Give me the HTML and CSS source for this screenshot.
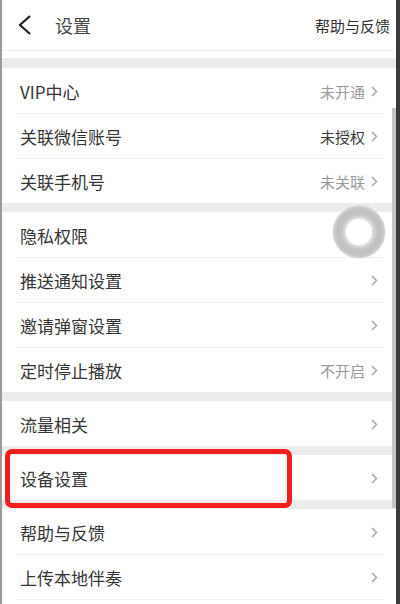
FILE: index.html
```html
<!DOCTYPE html>
<html lang="zh-CN">
<head>
<meta charset="utf-8">
<title>设置</title>
<link rel="stylesheet" href="styles.css">
</head>
<body>
<div class="screen">
  <header class="topbar">
    <div class="topbar-left">
      <svg class="back" width="14" height="20" viewBox="0 0 14 20"><polyline points="12,1 2,10 12,19" fill="none" stroke="#222" stroke-width="2.2" stroke-linejoin="miter"/></svg>
      <span class="title">设置</span>
    </div>
    <span class="help">帮助与反馈</span>
  </header>
  <div class="spacer"></div>

  <section class="group">
    <div class="row"><span class="label">VIP中心</span><span class="value muted">未开通</span><svg class="chev" width="7" height="11" viewBox="0 0 7 11"><polyline points="1,1 5.5,5.5 1,10" fill="none" stroke="#aaa" stroke-width="1.5"/></svg></div>
    <div class="row"><span class="label">关联微信账号</span><span class="value dark">未授权</span><svg class="chev" width="7" height="11" viewBox="0 0 7 11"><polyline points="1,1 5.5,5.5 1,10" fill="none" stroke="#aaa" stroke-width="1.5"/></svg></div>
    <div class="row"><span class="label">关联手机号</span><span class="value muted">未关联</span><svg class="chev" width="7" height="11" viewBox="0 0 7 11"><polyline points="1,1 5.5,5.5 1,10" fill="none" stroke="#aaa" stroke-width="1.5"/></svg></div>
  </section>

  <section class="group">
    <div class="row"><span class="label">隐私权限</span><svg class="chev" width="7" height="11" viewBox="0 0 7 11"><polyline points="1,1 5.5,5.5 1,10" fill="none" stroke="#aaa" stroke-width="1.5"/></svg></div>
    <div class="row"><span class="label">推送通知设置</span><svg class="chev" width="7" height="11" viewBox="0 0 7 11"><polyline points="1,1 5.5,5.5 1,10" fill="none" stroke="#aaa" stroke-width="1.5"/></svg></div>
    <div class="row"><span class="label">邀请弹窗设置</span><svg class="chev" width="7" height="11" viewBox="0 0 7 11"><polyline points="1,1 5.5,5.5 1,10" fill="none" stroke="#aaa" stroke-width="1.5"/></svg></div>
    <div class="row"><span class="label">定时停止播放</span><span class="value muted">不开启</span><svg class="chev" width="7" height="11" viewBox="0 0 7 11"><polyline points="1,1 5.5,5.5 1,10" fill="none" stroke="#aaa" stroke-width="1.5"/></svg></div>
  </section>

  <section class="group">
    <div class="row"><span class="label">流量相关</span><svg class="chev" width="7" height="11" viewBox="0 0 7 11"><polyline points="1,1 5.5,5.5 1,10" fill="none" stroke="#aaa" stroke-width="1.5"/></svg></div>
  </section>

  <section class="group">
    <div class="row"><span class="label">设备设置</span><svg class="chev" width="7" height="11" viewBox="0 0 7 11"><polyline points="1,1 5.5,5.5 1,10" fill="none" stroke="#aaa" stroke-width="1.5"/></svg></div>
  </section>

  <section class="group">
    <div class="row"><span class="label">帮助与反馈</span><svg class="chev" width="7" height="11" viewBox="0 0 7 11"><polyline points="1,1 5.5,5.5 1,10" fill="none" stroke="#aaa" stroke-width="1.5"/></svg></div>
    <div class="row"><span class="label">上传本地伴奏</span><svg class="chev" width="7" height="11" viewBox="0 0 7 11"><polyline points="1,1 5.5,5.5 1,10" fill="none" stroke="#aaa" stroke-width="1.5"/></svg></div>
    <div class="row"><span class="label">&nbsp;</span></div>
  </section>

  <div class="scrollbar"></div>
  <div class="touch"></div>
  <div class="highlight"></div>
</div>
</body>
</html>
```

FILE: styles.css
```css
html, body {
  margin: 0;
  padding: 0;
  background: #fff;
}

.screen {
  position: relative;
  width: 400px;
  height: 604px;
  box-sizing: border-box;
  border-left: 2px solid #9a9a9a;
  border-right: 4px solid #3a3a3a;
  overflow: hidden;
  background: #ececec;
  font-family: "Noto Sans CJK SC", "Noto Sans", sans-serif;
}

.topbar {
  height: 50px;
  background: #fff;
  border-bottom: 1px solid #f0f0f0;
  display: flex;
  align-items: center;
  justify-content: space-between;
  padding: 0 6px 0 16px;
}

.topbar-left {
  display: flex;
  align-items: center;
}

.back {
  display: block;
  margin-right: 23px;
}

.title {
  font-size: 18px;
  color: #4a4a4a;
  line-height: 1;
}

.help {
  font-size: 15px;
  color: #333;
  line-height: 1;
}

.spacer {
  height: 7px;
  background: #fff;
  margin-bottom: 10px;
}

.group {
  background: #fff;
  margin-bottom: 9px;
}

.row {
  height: 45px;
  display: flex;
  align-items: center;
  padding: 2px 18px 0 18px;
  box-sizing: border-box;
  position: relative;
}

.row + .row::before {
  content: "";
  position: absolute;
  top: 0;
  left: 13px;
  right: 11px;
  height: 1px;
  background: #f1f1f1;
}

.label {
  flex: 1;
  font-size: 17px;
  color: #363636;
  line-height: 1;
}

.value {
  font-size: 15px;
  line-height: 1;
  margin-right: 6px;
}

.value.muted {
  color: #9a9a9a;
}

.value.dark {
  color: #3a3a3a;
}

.chev {
  display: block;
}

.scrollbar {
  position: absolute;
  right: 0;
  top: 108px;
  width: 4px;
  height: 400px;
  background: #c4c4c4;
}

.touch {
  position: absolute;
  left: 330px;
  top: 205px;
  width: 54px;
  height: 54px;
  border-radius: 50%;
  background: radial-gradient(circle, rgba(255,255,255,0.15) 0, rgba(255,255,255,0.15) 12.5px, #dcdcdc 14px, #c4c4c4 18px, #c0c0c0 22px, #d0d0d0 25.5px, rgba(220,220,220,0) 27px);
}

.highlight {
  position: absolute;
  left: 3px;
  top: 449px;
  width: 287px;
  height: 59px;
  box-sizing: border-box;
  border: 5px solid #f21d1d;
  border-radius: 7px;
}
```
